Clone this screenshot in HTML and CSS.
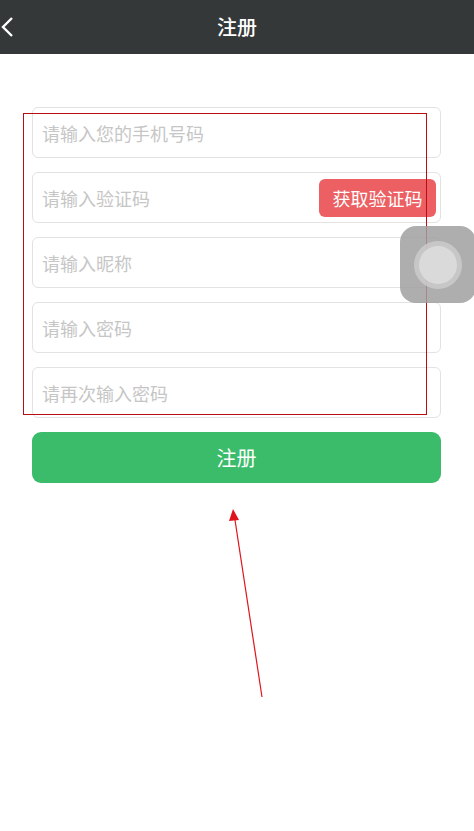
FILE: index.html
```html
<!DOCTYPE html>
<html lang="zh">
<head>
<meta charset="utf-8">
<title>注册</title>
<link rel="stylesheet" href="styles.css">
</head>
<body>
<header class="topbar">
  <svg class="back" width="14" height="22" viewBox="0 0 14 22"><path d="M12 2 L3 11 L12 20" fill="none" stroke="#fff" stroke-width="2.4"/></svg>
  <h1 class="title">注册</h1>
</header>
<main class="form">
  <div class="field"><span class="ph">请输入您的手机号码</span></div>
  <div class="field"><span class="ph">请输入验证码</span><button class="code-btn">获取验证码</button></div>
  <div class="field"><span class="ph">请输入昵称</span></div>
  <div class="field"><span class="ph">请输入密码</span></div>
  <div class="field"><span class="ph">请再次输入密码</span></div>
  <button class="submit">注册</button>
</main>
<div class="mark-box"></div>
<svg class="arrow" width="474" height="831" viewBox="0 0 474 831">
  <line x1="262" y1="697" x2="235" y2="520" stroke="#e0141c" stroke-width="1.2"/>
  <polygon points="233,509 229,521 239,520" fill="#e0141c"/>
</svg>
<div class="assist"><div class="ring"><div class="dot"></div></div></div>
</body>
</html>
```
FILE: styles.css
```css
* { box-sizing: border-box; }
html, body { margin: 0; padding: 0; }
body {
  width: 474px;
  height: 831px;
  background: #fff;
  font-family: "Noto Sans CJK SC", "Noto Sans", sans-serif;
  position: relative;
  overflow: hidden;
}
.topbar {
  height: 54px;
  background: #353839;
  display: flex;
  align-items: center;
  justify-content: center;
  position: relative;
}
.back { position: absolute; left: 0; top: 16px; }
.title {
  margin: 0;
  color: #fff;
  font-size: 20px;
  font-weight: 500;
  line-height: 1;
}
.form {
  padding: 53px 33px 0 32px;
  display: flex;
  flex-direction: column;
  gap: 14px;
}
.field {
  height: 51px;
  border: 1px solid #e2e2e2;
  border-radius: 6px;
  display: flex;
  align-items: center;
  justify-content: space-between;
  padding: 0 4px 0 9px;
}
.ph {
  color: #c6c6c6;
  font-size: 18px;
  line-height: 1;
}
.code-btn {
  border: 0;
  background: #ec5f63;
  color: #fff;
  font-family: inherit;
  font-size: 18px;
  height: 38px;
  width: 117px;
  border-radius: 6px;
  padding: 0;
}
.submit {
  height: 51px;
  border: 0;
  border-radius: 9px;
  background: #3bbc6b;
  color: #fff;
  font-family: inherit;
  font-size: 20px;
}
.mark-box {
  position: absolute;
  left: 23px;
  top: 113px;
  width: 404px;
  height: 302px;
  border: 1px solid #b80d12;
}
.arrow { position: absolute; left: 0; top: 0; }
.assist {
  position: absolute;
  left: 400px;
  top: 226px;
  width: 76px;
  height: 77px;
  border-radius: 16px;
  background: rgba(160,160,160,0.85);
  display: flex;
  align-items: center;
  justify-content: center;
}
.ring {
  width: 48px;
  height: 48px;
  border-radius: 50%;
  background: rgba(205,205,205,0.8);
  display: flex;
  align-items: center;
  justify-content: center;
}
.dot {
  width: 38px;
  height: 38px;
  border-radius: 50%;
  background: #dadada;
}
```
